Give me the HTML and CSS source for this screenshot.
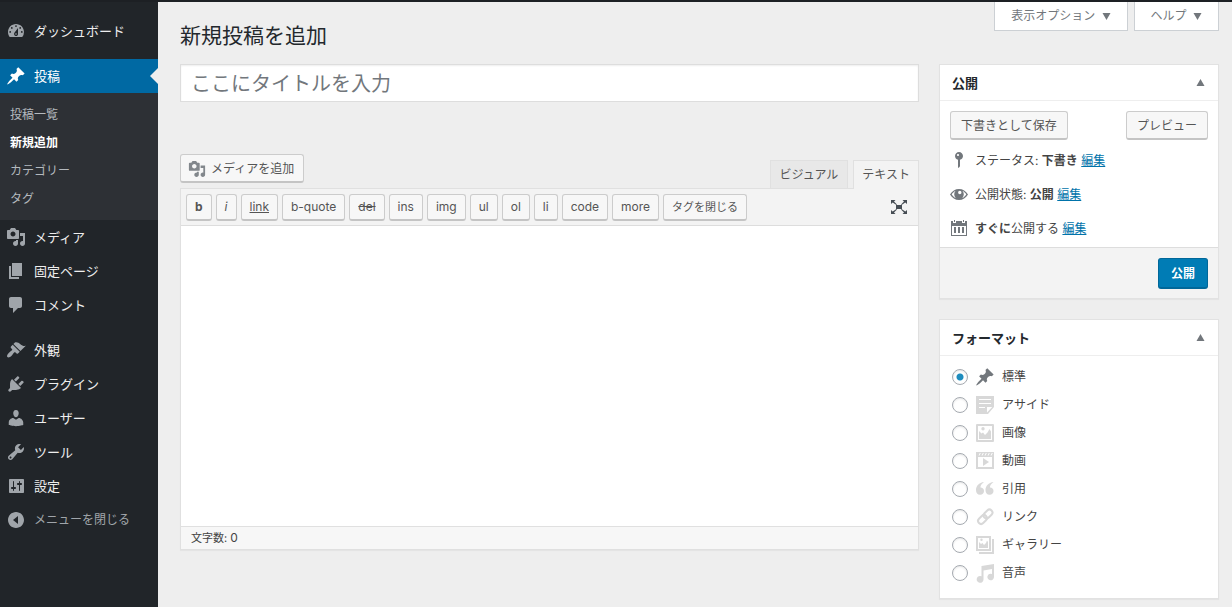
FILE: index.html
```html
<!DOCTYPE html>
<html lang="ja">
<head>
    <meta charset="UTF-8">
    <meta name="viewport" content="width=device-width, initial-scale=1.0">
    <title>新規投稿を追加</title>
    <link rel="stylesheet" href="styles.css">
</head>
<body>

    <!-- Icon sprite -->
    <svg class="sprite">
        <symbol id="i-pin" viewBox="0 0 20 20"><path d="M10.44 3.02l1.82-1.82 6.36 6.35-1.83 1.82c-1.05-.68-2.48-.57-3.41.36l-.75.75c-.92.93-1.04 2.35-.35 3.41l-1.83 1.82-2.41-2.41-2.8 2.79c-.42.42-3.38 2.71-3.8 2.29s1.86-3.39 2.28-3.81l2.79-2.79L4.1 9.36l1.83-1.82c1.05.69 2.48.57 3.4-.36l.75-.75c.93-.92 1.05-2.35.36-3.41z"/></symbol>
        <symbol id="i-media" viewBox="0 0 20 20"><path fill-rule="evenodd" d="M13 11V4c0-.55-.45-1-1-1h-1.67L9 1H5L3.67 3H2c-.55 0-1 .45-1 1v7c0 .55.45 1 1 1h10c.55 0 1-.45 1-1zM7 4.5c1.38 0 2.5 1.12 2.5 2.5S8.38 9.5 7 9.5 4.5 8.38 4.5 7 5.62 4.5 7 4.5zM14 6h5v10.5c0 1.38-1.12 2.5-2.5 2.5S14 17.88 14 16.5s1.12-2.5 2.5-2.5c.17 0 .34.02.5.05V9h-3V6zm-4 8.05V13h2v3.5c0 1.38-1.12 2.5-2.5 2.5S7 17.88 7 16.5 8.12 14 9.5 14c.17 0 .34.02.5.05z"/></symbol>
    </svg>

    <div class="admin-bar"></div>

    <div class="wrap">

        <!-- Side menu -->
        <nav class="menu">
            <a class="menu-item" href="#">
                <svg class="icon" viewBox="0 0 20 20"><path fill-rule="evenodd" d="M3.76 16h12.48A7.95 7.95 0 0 0 18 11c0-4.42-3.58-8-8-8s-8 3.58-8 8c0 1.89.66 3.63 1.76 5zM10 4.200a.9.9 0 1 1 0 1.800.9.9 0 0 1 0-1.800zM5.800 6a.9.9 0 1 1 0 1.800.9.9 0 0 1 0-1.800zm8.400 0a.9.9 0 1 1 0 1.800.9.9 0 0 1 0-1.800zM4.200 10a.9.9 0 1 1 0 1.800.9.9 0 0 1 0-1.800zm11.600 0a.9.9 0 1 1 0 1.800.9.9 0 0 1 0-1.800zM8.600 11.600L12 7v5.500a2 2 0 1 1-3.400-.9zM10 12.200a.8.8 0 1 0 0 1.600.8.8 0 0 0 0-1.600z"/></svg>
                ダッシュボード
            </a>
            <a class="menu-item current gap" href="#"><svg class="icon"><use href="#i-pin"/></svg>投稿</a>
            <div class="submenu">
                <a href="#">投稿一覧</a>
                <a href="#" class="active">新規追加</a>
                <a href="#">カテゴリー</a>
                <a href="#">タグ</a>
            </div>
            <a class="menu-item" href="#"><svg class="icon"><use href="#i-media"/></svg>メディア</a>
            <a class="menu-item" href="#">
                <svg class="icon" viewBox="0 0 20 20"><path d="M6 15V2h10v13H6zm-1 1h8v2H3V5h2v11z"/></svg>
                固定ページ
            </a>
            <a class="menu-item" href="#">
                <svg class="icon" viewBox="0 0 20 20"><path d="M5 2h9c1.1 0 2 .9 2 2v7c0 1.1-.9 2-2 2h-2l-5 5v-5H5c-1.1 0-2-.9-2-2V4c0-1.1.9-2 2-2z"/></svg>
                コメント
            </a>
            <a class="menu-item gap" href="#">
                <svg class="icon" viewBox="0 0 20 20"><path d="M14.48 11.06L7.41 3.99l1.5-1.5c.5-.56 2.3-.47 3.51.32 1.21.8 1.43 1.28 2.91 2.1 1.18.64 2.45 1.26 4.45.85zm-.71.71L6.7 4.7 4.93 6.47c-.39.39-.39 1.02 0 1.41l1.06 1.06c.39.39.39 1.03 0 1.42-.6.6-1.43 1.11-2.21 1.69-.35.26-.7.53-1.01.84C1.43 14.23.4 16.08 1.4 17.07c.99 1 2.84-.03 4.18-1.36.31-.31.58-.66.85-1.02.57-.78 1.08-1.61 1.69-2.21.39-.39 1.02-.39 1.41 0l1.06 1.06c.39.39 1.02.39 1.41 0z"/></svg>
                外観
            </a>
            <a class="menu-item" href="#">
                <svg class="icon" viewBox="0 0 20 20"><path d="M13.11 4.36L9.87 7.6 8 5.73l3.24-3.24c.35-.34 1.05-.2 1.56.32.52.51.66 1.21.31 1.55zm-8 1.77l.91-1.12 9.01 9.01-1.19.84c-.71.71-2.63 1.16-3.82 1.16H6.14L4.9 17.26c-.59.59-1.54.59-2.12 0-.59-.58-.59-1.53 0-2.12l1.24-1.24v-3.88c0-1.13.4-3.19 1.09-3.89zm7.26 3.97l3.24-3.24c.34-.35 1.04-.21 1.55.31.52.51.66 1.21.31 1.55l-3.24 3.25z"/></svg>
                プラグイン
            </a>
            <a class="menu-item" href="#">
                <svg class="icon" viewBox="0 0 20 20"><path d="M10 9.25c-2.27 0-2.73-3.44-2.73-3.44C7 4.02 7.82 2 9.97 2c2.16 0 2.98 2.02 2.71 3.81 0 0-.41 3.44-2.68 3.44zm0 2.57L12.72 10c2.39 0 4.52 2.33 4.52 4.53v2.49s-3.65 1.13-7.24 1.13c-3.65 0-7.24-1.13-7.24-1.13v-2.49c0-2.25 1.94-4.48 4.47-4.48z"/></svg>
                ユーザー
            </a>
            <a class="menu-item" href="#">
                <svg class="icon" viewBox="0 0 20 20"><path fill-rule="evenodd" d="M16.68 9.77c-1.34 1.34-3.3 1.67-4.95.99l-5.41 6.52c-.99.99-2.59.99-3.58 0s-.99-2.59 0-3.57l6.52-5.42c-.68-1.65-.35-3.61.99-4.95 1.28-1.28 3.12-1.62 4.72-1.06l-2.89 2.89 2.82 2.82 2.86-2.87c.53 1.58.18 3.39-1.08 4.65zM3.81 16.21c.4.39 1.04.39 1.43 0 .4-.4.4-1.04 0-1.43-.39-.4-1.03-.4-1.43 0-.39.39-.39 1.03 0 1.43z"/></svg>
                ツール
            </a>
            <a class="menu-item" href="#">
                <svg class="icon" viewBox="0 0 20 20"><path fill-rule="evenodd" d="M18 16V4c0-.55-.45-1-1-1H4c-.55 0-1 .45-1 1v12c0 .55.45 1 1 1h13c.55 0 1-.45 1-1zM8 11h1c.55 0 1 .45 1 1s-.45 1-1 1H8v1.500c0 .28-.22.5-.5.5s-.5-.22-.5-.5V13H6c-.55 0-1-.45-1-1s.45-1 1-1h1V5.500c0-.28.22-.5.5-.5s.5.22.5.5V11zm5-2h-1c-.55 0-1-.45-1-1s.45-1 1-1h1V5.500c0-.28.22-.5.5-.5s.5.22.5.5V7h1c.55 0 1 .45 1 1s-.45 1-1 1h-1v5.500c0 .28-.22.5-.5.5s-.5-.22-.5-.5V9z"/></svg>
                設定
            </a>
            <button type="button" class="menu-item collapse">
                <svg class="icon" viewBox="0 0 20 20"><path fill-rule="evenodd" d="M10 2c4.42 0 8 3.58 8 8s-3.58 8-8 8-8-3.58-8-8 3.58-8 8-8zm2 12V6l-5 4z"/></svg>
                メニューを閉じる
            </button>
        </nav>

        <!-- Content -->
        <main class="content">
            <header class="page-head">
                <h1>新規投稿を追加</h1>
                <div class="screen-links">
                    <button type="button">表示オプション <svg class="arrow" viewBox="0 0 8 7"><path d="M0 0h8L4 7z"/></svg></button>
                    <button type="button">ヘルプ <svg class="arrow" viewBox="0 0 8 7"><path d="M0 0h8L4 7z"/></svg></button>
                </div>
            </header>

            <form class="columns">
                <div class="editor-col">
                    <input type="text" class="title-input" placeholder="ここにタイトルを入力" aria-label="タイトル">

                    <div class="editor-tools">
                        <button type="button" class="btn add-media"><svg class="media-icon"><use href="#i-media"/></svg>メディアを追加</button>
                        <div class="tabs">
                            <button type="button" class="tab">ビジュアル</button>
                            <button type="button" class="tab tab-active">テキスト</button>
                        </div>
                    </div>

                    <div class="editor">
                        <div class="toolbar">
                            <button type="button" class="btn tag"><b>b</b></button>
                            <button type="button" class="btn tag"><i>i</i></button>
                            <button type="button" class="btn tag"><u>link</u></button>
                            <button type="button" class="btn tag">b-quote</button>
                            <button type="button" class="btn tag"><s>del</s></button>
                            <button type="button" class="btn tag">ins</button>
                            <button type="button" class="btn tag">img</button>
                            <button type="button" class="btn tag">ul</button>
                            <button type="button" class="btn tag">ol</button>
                            <button type="button" class="btn tag">li</button>
                            <button type="button" class="btn tag">code</button>
                            <button type="button" class="btn tag">more</button>
                            <button type="button" class="btn tag tag-close">タグを閉じる</button>
                            <button type="button" class="fullscreen" aria-label="全画面">
                                <svg viewBox="0 0 18 16"><path d="M6 6h6v4H6zM1 1h4.500L4 2.500 7 5.500l-.6.600L2.700 3.500 1 5zM17 1h-4.500L14 2.500l-3 3 .6.600 3.700-2.600L17 5zM1 15h4.500L4 13.500l3-3-.6-.6-3.700 2.600L1 11zM17 15h-4.500l1.500-1.500-3-3 .6-.6 3.700 2.600L17 11z"/></svg>
                            </button>
                        </div>
                        <textarea class="text-area" aria-label="本文"></textarea>
                        <div class="word-count">文字数: <span class="count">0</span></div>
                    </div>
                </div>

                <aside class="side-col">
                    <!-- Publish box -->
                    <section class="postbox">
                        <h2>公開 <svg class="arrow" viewBox="0 0 8 7"><path d="M0 7h8L4 0z"/></svg></h2>
                        <div class="save-row">
                            <button type="button" class="btn">下書きとして保存</button>
                            <button type="button" class="btn">プレビュー</button>
                        </div>
                        <div class="misc-row">
                            <svg class="icon" viewBox="0 0 20 20"><path fill-rule="evenodd" d="M14 6c0 1.860-1.280 3.410-3 3.860V16c0 1-2 2-2 2V9.860c-1.720-.45-3-2-3-3.860 0-2.210 1.790-4 4-4s4 1.790 4 4zM8 5c0 .55.45 1 1 1s1-.45 1-1-.45-1-1-1-1 .45-1 1z"/></svg>
                            <p>ステータス: <b>下書き</b> <a href="#">編集</a></p>
                        </div>
                        <div class="misc-row">
                            <svg class="icon" viewBox="0 0 20 20"><path fill-rule="evenodd" d="M1 10.500C3 7 6.300 5 10 5s7 2 9 5.500c-2 3.500-5.300 5.500-9 5.500s-7-2-9-5.500zm1.700 0c1 1.600 2.400 2.800 4 3.500A5 5 0 0 1 6.500 7.100c-1.600.7-2.900 1.900-3.800 3.400zm14.600 0c-.9-1.500-2.200-2.700-3.800-3.400a5 5 0 0 1-.2 6.900c1.600-.7 3-1.900 4-3.500zM10.800 6.800a1.700 1.700 0 1 0 0 3.400 1.700 1.700 0 0 0 0-3.400z"/></svg>
                            <p>公開状態: <b>公開</b> <a href="#">編集</a></p>
                        </div>
                        <div class="misc-row">
                            <svg class="icon" viewBox="0 0 20 20"><path fill-rule="evenodd" d="M2 3h2v2h3V3h6v2h3V3h2v15H2zM3 8v9h14V8zM5 9h2v6H5zm4 0h2v6H9zm4 0h2v6h-2zM5 2h1v2H5zm9 0h1v2h-1z"/></svg>
                            <p><b>すぐに</b>公開する <a href="#">編集</a></p>
                        </div>
                        <div class="publish-row">
                            <button type="button" class="btn btn-primary">公開</button>
                        </div>
                    </section>

                    <!-- Format box -->
                    <section class="postbox">
                        <h2>フォーマット <svg class="arrow" viewBox="0 0 8 7"><path d="M0 7h8L4 0z"/></svg></h2>
                        <div class="formats">
                            <label class="selected"><input type="radio" name="format" checked>
                                <svg class="icon"><use href="#i-pin"/></svg>標準</label>
                            <label><input type="radio" name="format">
                                <svg class="icon" viewBox="0 0 20 20"><path fill-rule="evenodd" d="M1 1h18v11l-6 7H1zM4 4v1h12V4zm0 4v1h12V8zm0 4v1h6v-1zm8 0v5.500L17.200 12z"/></svg>アサイド</label>
                            <label><input type="radio" name="format">
                                <svg class="icon" viewBox="0 0 20 20"><path fill-rule="evenodd" d="M2 1h16a1 1 0 0 1 1 1v16a1 1 0 0 1-1 1H2a1 1 0 0 1-1-1V2a1 1 0 0 1 1-1zm1 2v14h14V3zm1 5l2.500 2.500L8 9.500l2 2.500 2.500-2.500L14.500 6 16 8.500V16H4zm4-4a1.700 1.700 0 1 1 0 3.400A1.700 1.700 0 0 1 8 4z"/></svg>画像</label>
                            <label><input type="radio" name="format">
                                <svg class="icon" viewBox="0 0 20 20"><path fill-rule="evenodd" d="M1 1h18v17H1zM3 6v10h14V6zM4.800 2L3.500 4.500h1L5.800 2zm3 0L6.500 4.500h1L8.800 2zm3 0L9.500 4.500h1L11.800 2zm3 0l-1.300 2.500h1L14.800 2zm3 0l-1.300 2.500h1L17.800 2zM8 7l6 4-6 4z"/></svg>動画</label>
                            <label><input type="radio" name="format">
                                <svg class="icon" viewBox="0 0 20 20"><path d="M9 3C6.500 4.800 5.300 7 5.500 8.500c2 0 3.500 1.400 3.500 3.500a3.700 3.700 0 0 1-4 3.800C2.500 15.800 1 14 1 11c0-4 3-7.400 8-8zm9.500 0C16 4.800 14.800 7 15 8.500c2 0 3.500 1.400 3.500 3.500a3.700 3.700 0 0 1-4 3.800c-2.500 0-4-1.800-4-4.800 0-4 3-7.400 8-8z"/></svg>引用</label>
                            <label><input type="radio" name="format">
                                <svg class="icon" viewBox="0 0 20 20"><g fill="none" stroke="currentColor" stroke-width="2"><rect x="-5" y="-3" width="10" height="6" rx="3" transform="translate(13 7) rotate(-45)"/><rect x="-5" y="-3" width="10" height="6" rx="3" transform="translate(7.500 12.500) rotate(-45)"/></g></svg>リンク</label>
                            <label><input type="radio" name="format">
                                <svg class="icon" viewBox="0 0 20 20"><path fill-rule="evenodd" d="M1 1h15v15H1zM3 3v11h11V3zM4 7l2 2 1.500-1L9 10l2-2 1-2.500L13 7v6H4zm2.500-3.500a1.200 1.200 0 1 1 0 2.400 1.200 1.200 0 0 1 0-2.400zM17 4h2v15H4v-2h13z"/></svg>ギャラリー</label>
                            <label><input type="radio" name="format">
                                <svg class="icon" viewBox="0 0 20 20"><path d="M6.500 3L19 1v13a3.300 3.300 0 1 1-2-3V6L8.500 7.500v8.800a3.400 3.400 0 1 1-2-3z"/></svg>音声</label>
                        </div>
                    </section>
                </aside>
            </form>
        </main>
    </div>

</body>
</html>
```

FILE: styles.css
```css
* {
    margin: 0;
    padding: 0;
    box-sizing: border-box;
}
body {
    font-family: Inter, "Noto Sans CJK JP", sans-serif;
    font-size: 12px;
    line-height: 18px;
    color: #444;
    background: #eee;
    min-height: 100vh;
    display: flex;
    flex-direction: column;
}
button, input, textarea {
    font: inherit;
    color: inherit;
}
button {
    cursor: pointer;
}
.sprite {
    display: none;
}
.admin-bar {
    height: 2px;
    background: #1d2024;
}
.wrap {
    flex: 1;
    display: flex;
}
.icon {
    width: 20px;
    height: 20px;
    flex: none;
    fill: currentColor;
}
.arrow {
    width: 9px;
    height: 7px;
    fill: #72777c;
}

/* Side menu */
.menu {
    width: 158px;
    flex: none;
    padding-top: 12px;
    background: #212529;
}
.menu-item {
    display: flex;
    align-items: center;
    gap: 8px;
    height: 34px;
    padding-left: 6px;
    font-size: 13px;
    color: #eee;
    text-decoration: none;
}
.menu-item .icon {
    color: #a0a5aa;
}
.menu-item.gap {
    margin-top: 11px;
}
.menu-item.current {
    position: relative;
    color: #fff;
    background: #0069a3;
}
.menu-item.current .icon {
    color: #fff;
}
.menu-item.current::after {
    content: "";
    position: absolute;
    right: 0;
    top: 9px;
    border: 8px solid transparent;
    border-left: 0;
    border-right-color: #eee;
}
.menu-item.collapse {
    width: 100%;
    border: 0;
    background: none;
    font-size: 12px;
    color: #a0a5aa;
}
.submenu {
    padding: 8px 10px 7px;
    background: #2d3035;
}
.submenu a {
    display: block;
    line-height: 28px;
    color: #b4b9be;
    text-decoration: none;
}
.submenu .active {
    color: #fff;
    font-weight: bold;
}

/* Content */
.content {
    flex: 1;
    min-width: 0;
    padding: 0 13px 8px 22px;
}
.page-head {
    display: flex;
    justify-content: space-between;
    height: 62px;
}
.page-head h1 {
    font-size: 21px;
    font-weight: normal;
    line-height: 28px;
    padding-top: 20px;
    color: #23282d;
}
.screen-links {
    display: flex;
    align-items: flex-start;
    gap: 6px;
}
.screen-links button {
    height: 29px;
    padding: 0 16px;
    border: 1px solid #ccd0d4;
    border-top: 0;
    background: #fff;
    color: #72777c;
}
.screen-links .arrow {
    margin-left: 3px;
}
.columns {
    display: grid;
    grid-template-columns: minmax(0, 1fr) 280px;
    gap: 20px;
}
.title-input {
    display: block;
    width: 100%;
    height: 38px;
    padding: 2px 10px 0;
    border: 1px solid #ddd;
    background: #fff;
    box-shadow: inset 0 1px 2px rgba(0, 0, 0, 0.07);
    font-size: 20px;
}
.title-input::placeholder {
    color: #72777c;
}
.btn {
    height: 29px;
    padding: 1px 10px 0;
    border: 1px solid #ccc;
    border-bottom: 2px solid #c4c4c4;
    border-radius: 3px;
    background: #f7f7f7;
    color: #555;
}
.editor-tools {
    display: flex;
    justify-content: space-between;
    align-items: flex-start;
    margin-top: 52px;
}
.add-media {
    display: flex;
    align-items: center;
    gap: 5px;
    padding: 1px 9px 0 7px;
}
.media-icon {
    width: 18px;
    height: 18px;
    fill: #82878c;
}
.tabs {
    display: flex;
    gap: 5px;
    margin-top: 6px;
}
.tab {
    height: 28px;
    padding: 0 9px;
    border: 1px solid #e0e0e0;
    border-bottom: 0;
    background: #e8e8e8;
    color: #555;
}
.tab-active {
    height: 29px;
    margin-bottom: -1px;
    padding: 0 8px;
    position: relative;
    background: #f3f3f3;
}
.editor {
    border: 1px solid #e0e0e0;
    box-shadow: 0 1px 1px rgba(0, 0, 0, 0.04);
}
.toolbar {
    display: flex;
    flex-wrap: wrap;
    gap: 4px;
    padding: 5px 5px 4px;
    border-bottom: 1px solid #ddd;
    background: #f3f3f3;
}
.btn.tag {
    height: 27px;
    padding: 0 8px;
}
.btn.tag-close {
    font-size: 11px;
}
.fullscreen {
    width: 28px;
    height: 26px;
    margin-left: auto;
    border: 0;
    background: none;
}
.fullscreen svg {
    display: block;
    width: 18px;
    height: 16px;
    margin: 0 auto;
    fill: #464d54;
}
.text-area {
    display: block;
    width: 100%;
    height: 300px;
    padding: 10px;
    border: 0;
    background: #fff;
    resize: none;
}
.word-count {
    padding: 2px 10px;
    border-top: 1px solid #e0e0e0;
    background: #f7f7f7;
    font-size: 11px;
}
.count {
    font-size: 12px;
}

/* Boxes on the right */
.postbox {
    margin-bottom: 20px;
    border: 1px solid #e2e2e2;
    background: #fff;
    box-shadow: 0 1px 1px rgba(0, 0, 0, 0.04);
}
.postbox:last-child {
    margin-bottom: 0;
}
.postbox h2 {
    display: flex;
    justify-content: space-between;
    align-items: center;
    height: 36px;
    padding: 0 13px 0 12px;
    border-bottom: 1px solid #eee;
    font-size: 13px;
    color: #23282d;
}
.save-row {
    display: flex;
    justify-content: space-between;
    padding: 10px 10px 3px;
}
.misc-row {
    display: flex;
    align-items: center;
    gap: 6px;
    height: 34px;
    padding: 0 9px;
}
.misc-row p {
    padding-top: 2px;
}
.misc-row .icon {
    color: #72777c;
}
.misc-row a {
    color: #0073aa;
}
.publish-row {
    display: flex;
    justify-content: flex-end;
    margin-top: 2px;
    padding: 10px 10px 9px;
    border-top: 1px solid #ddd;
    background: #f3f3f3;
}
.btn-primary {
    height: 31px;
    padding: 1px 12px 0;
    border-color: #006799;
    background: #007cb5;
    color: #fff;
    font-weight: bold;
}
.formats {
    padding: 7px 12px 11px;
}
.formats label {
    display: flex;
    align-items: center;
    height: 28px;
}
.formats input {
    appearance: none;
    width: 16px;
    height: 16px;
    margin-right: 7px;
    border: 1px solid #a5aab0;
    border-radius: 50%;
    background: #fff;
    box-shadow: inset 0 1px 2px rgba(0, 0, 0, 0.1);
}
.formats input:checked {
    background: radial-gradient(circle, #1e8cbe 3px, #fff 4px);
}
.formats .icon {
    margin-right: 7px;
    color: #d8d8d8;
}
.formats .selected .icon {
    color: #72777c;
}
```
